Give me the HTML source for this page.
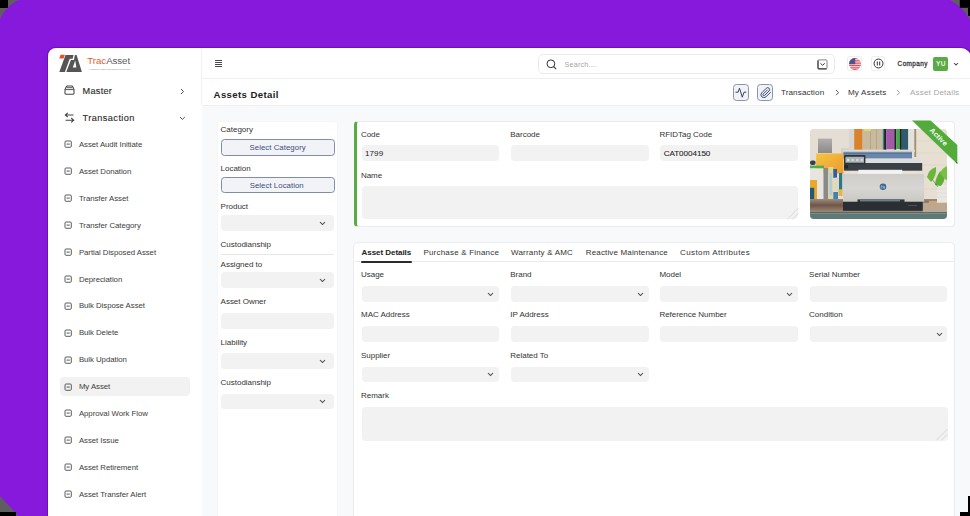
<!DOCTYPE html>
<html><head><meta charset="utf-8">
<style>
*{box-sizing:border-box;margin:0;padding:0}
html,body{width:970px;height:516px;overflow:hidden}
body{background:#8719dd;font-family:"Liberation Sans",sans-serif;position:relative;color:#333}
.a{position:absolute}
.t{position:absolute;white-space:nowrap;line-height:1}
</style></head><body>

<svg class="a" style="left:0;top:0" width="24" height="24"><path d="M0 0H20C12 2 2 12 0 20Z" fill="#5e5e5e"/><rect x="0" y="0" width="8" height="8" fill="#000"/></svg>
<div class="a" style="left:48.00px;top:47.60px;width:923.00px;height:512.40px;background:#fff;border-radius:8px 10px 0 0;box-shadow:0 0 0.8px 0.2px rgba(40,0,80,0.3)"></div>
<div class="a" style="left:201.30px;top:48.00px;width:1.00px;height:57.00px;background:#eff1f3"></div>
<div class="a" style="left:202.00px;top:77.80px;width:768.00px;height:1.00px;background:#eef0f3"></div>
<div class="a" style="left:201.80px;top:104.50px;width:768.20px;height:411.50px;background:#f8f9fb;border-top:1px solid #eceef1"></div>
<svg class="a" style="left:0;top:0" width="90" height="80" viewBox="0 0 90 80">
  <path d="M60.6 54.7H64.9L63.5 58.6H59.2Z" fill="#e8501e"/>
  <path d="M65.5 55H73.6L72.6 58.7L69.7 58.8L64.9 72H59.3Z" fill="#555"/>
  <path d="M74.9 55H76.6L81.9 72H66.3L70.9 60L73.9 59.9Z" fill="#555"/>
  <path d="M75.2 60.4L76.4 67.6H72.8Z" fill="#fff"/>
</svg>
<div class="t" style="left:87.30px;top:55.99px;font-size:9.7px;color:#5a5a5a;font-weight:normal;letter-spacing:-0.05px;"><span style="color:#e4602c">Trac</span>Asset</div>
<div class="t" style="left:87.80px;top:68.83px;font-size:2.45px;color:#8a8a8a;font-weight:normal;letter-spacing:0.0px;">A complete asset management solution</div>
<svg class="a" style="left:63.8px;top:85.3px" width="11" height="10" viewBox="0 0 11 10"><path d="M3.4 1H7.6Q8.5 1 8.8 1.8L10 4.6V8.2Q10 9.2 9 9.2H2Q1 9.2 1 8.2V4.6L2.2 1.8Q2.5 1 3.4 1Z" fill="none" stroke="#444" stroke-width="1.05"/><path d="M1.2 4.6H9.8M2.6 2.7H8.4" stroke="#444" stroke-width="0.9"/></svg>
<div class="t" style="left:82.60px;top:86.61px;font-size:9.2px;color:#2a2a2a;font-weight:normal;letter-spacing:0.25px;-webkit-text-stroke:0.12px #2a2a2a">Master</div>
<svg class="a" style="left:180.35px;top:87.70px" width="4.50" height="7.00"><path d="M1 1L3.50 3.50L1 6.00" fill="none" stroke="#444" stroke-width="0.95"/></svg>
<svg class="a" style="left:64px;top:111.7px" width="11" height="11" viewBox="0 0 11 11"><path d="M9.5 3H1.5M3.8 0.8L1.3 3L3.8 5.2" fill="none" stroke="#444" stroke-width="1.1"/><path d="M1.5 8.2H9.5M7.2 6L9.7 8.2L7.2 10.4" fill="none" stroke="#444" stroke-width="1.1"/></svg>
<div class="t" style="left:82.60px;top:113.61px;font-size:9.2px;color:#2a2a2a;font-weight:normal;letter-spacing:0.42px;-webkit-text-stroke:0.12px #2a2a2a">Transaction</div>
<svg class="a" style="left:179.30px;top:115.50px" width="6.80" height="4.40"><path d="M1 1L3.40 3.40L5.80 1" fill="none" stroke="#444" stroke-width="0.95"/></svg>
<div class="a" style="left:59.90px;top:377.00px;width:129.90px;height:19.00px;background:#f2f2f2;border-radius:4px"></div>
<svg class="a" style="left:63.5px;top:140.40px" width="8" height="8" viewBox="0 0 8 8"><rect x="1" y="1" width="6.3" height="6.3" rx="1.0" fill="none" stroke="#555" stroke-width="0.95"/><path d="M2.6 4.1H5.7" stroke="#555" stroke-width="1.0"/></svg>
<div class="t" style="left:78.90px;top:141.00px;font-size:7.8px;color:#3c3c3c;font-weight:normal;letter-spacing:-0.04px;">Asset Audit Initiate</div>
<svg class="a" style="left:63.5px;top:167.30px" width="8" height="8" viewBox="0 0 8 8"><rect x="1" y="1" width="6.3" height="6.3" rx="1.0" fill="none" stroke="#555" stroke-width="0.95"/><path d="M2.6 4.1H5.7" stroke="#555" stroke-width="1.0"/></svg>
<div class="t" style="left:78.90px;top:167.90px;font-size:7.8px;color:#3c3c3c;font-weight:normal;letter-spacing:-0.04px;">Asset Donation</div>
<svg class="a" style="left:63.5px;top:194.20px" width="8" height="8" viewBox="0 0 8 8"><rect x="1" y="1" width="6.3" height="6.3" rx="1.0" fill="none" stroke="#555" stroke-width="0.95"/><path d="M2.6 4.1H5.7" stroke="#555" stroke-width="1.0"/></svg>
<div class="t" style="left:78.90px;top:194.80px;font-size:7.8px;color:#3c3c3c;font-weight:normal;letter-spacing:-0.04px;">Transfer Asset</div>
<svg class="a" style="left:63.5px;top:221.10px" width="8" height="8" viewBox="0 0 8 8"><rect x="1" y="1" width="6.3" height="6.3" rx="1.0" fill="none" stroke="#555" stroke-width="0.95"/><path d="M2.6 4.1H5.7" stroke="#555" stroke-width="1.0"/></svg>
<div class="t" style="left:78.90px;top:221.70px;font-size:7.8px;color:#3c3c3c;font-weight:normal;letter-spacing:-0.04px;">Transfer Category</div>
<svg class="a" style="left:63.5px;top:248.00px" width="8" height="8" viewBox="0 0 8 8"><rect x="1" y="1" width="6.3" height="6.3" rx="1.0" fill="none" stroke="#555" stroke-width="0.95"/><path d="M2.6 4.1H5.7" stroke="#555" stroke-width="1.0"/></svg>
<div class="t" style="left:78.90px;top:248.60px;font-size:7.8px;color:#3c3c3c;font-weight:normal;letter-spacing:-0.04px;">Partial Disposed Asset</div>
<svg class="a" style="left:63.5px;top:274.90px" width="8" height="8" viewBox="0 0 8 8"><rect x="1" y="1" width="6.3" height="6.3" rx="1.0" fill="none" stroke="#555" stroke-width="0.95"/><path d="M2.6 4.1H5.7" stroke="#555" stroke-width="1.0"/></svg>
<div class="t" style="left:78.90px;top:275.50px;font-size:7.8px;color:#3c3c3c;font-weight:normal;letter-spacing:-0.04px;">Depreciation</div>
<svg class="a" style="left:63.5px;top:301.80px" width="8" height="8" viewBox="0 0 8 8"><rect x="1" y="1" width="6.3" height="6.3" rx="1.0" fill="none" stroke="#555" stroke-width="0.95"/><path d="M2.6 4.1H5.7" stroke="#555" stroke-width="1.0"/></svg>
<div class="t" style="left:78.90px;top:302.40px;font-size:7.8px;color:#3c3c3c;font-weight:normal;letter-spacing:-0.04px;">Bulk Dispose Asset</div>
<svg class="a" style="left:63.5px;top:328.70px" width="8" height="8" viewBox="0 0 8 8"><rect x="1" y="1" width="6.3" height="6.3" rx="1.0" fill="none" stroke="#555" stroke-width="0.95"/><path d="M2.6 4.1H5.7" stroke="#555" stroke-width="1.0"/></svg>
<div class="t" style="left:78.90px;top:329.30px;font-size:7.8px;color:#3c3c3c;font-weight:normal;letter-spacing:-0.04px;">Bulk Delete</div>
<svg class="a" style="left:63.5px;top:355.60px" width="8" height="8" viewBox="0 0 8 8"><rect x="1" y="1" width="6.3" height="6.3" rx="1.0" fill="none" stroke="#555" stroke-width="0.95"/><path d="M2.6 4.1H5.7" stroke="#555" stroke-width="1.0"/></svg>
<div class="t" style="left:78.90px;top:356.20px;font-size:7.8px;color:#3c3c3c;font-weight:normal;letter-spacing:-0.04px;">Bulk Updation</div>
<svg class="a" style="left:63.5px;top:382.50px" width="8" height="8" viewBox="0 0 8 8"><rect x="1" y="1" width="6.3" height="6.3" rx="1.0" fill="none" stroke="#555" stroke-width="0.95"/><path d="M2.6 4.1H5.7" stroke="#555" stroke-width="1.0"/></svg>
<div class="t" style="left:78.90px;top:383.10px;font-size:7.8px;color:#3c3c3c;font-weight:normal;letter-spacing:-0.04px;">My Asset</div>
<svg class="a" style="left:63.5px;top:409.40px" width="8" height="8" viewBox="0 0 8 8"><rect x="1" y="1" width="6.3" height="6.3" rx="1.0" fill="none" stroke="#555" stroke-width="0.95"/><path d="M2.6 4.1H5.7" stroke="#555" stroke-width="1.0"/></svg>
<div class="t" style="left:78.90px;top:410.00px;font-size:7.8px;color:#3c3c3c;font-weight:normal;letter-spacing:-0.04px;">Approval Work Flow</div>
<svg class="a" style="left:63.5px;top:436.30px" width="8" height="8" viewBox="0 0 8 8"><rect x="1" y="1" width="6.3" height="6.3" rx="1.0" fill="none" stroke="#555" stroke-width="0.95"/><path d="M2.6 4.1H5.7" stroke="#555" stroke-width="1.0"/></svg>
<div class="t" style="left:78.90px;top:436.90px;font-size:7.8px;color:#3c3c3c;font-weight:normal;letter-spacing:-0.04px;">Asset Issue</div>
<svg class="a" style="left:63.5px;top:463.20px" width="8" height="8" viewBox="0 0 8 8"><rect x="1" y="1" width="6.3" height="6.3" rx="1.0" fill="none" stroke="#555" stroke-width="0.95"/><path d="M2.6 4.1H5.7" stroke="#555" stroke-width="1.0"/></svg>
<div class="t" style="left:78.90px;top:463.80px;font-size:7.8px;color:#3c3c3c;font-weight:normal;letter-spacing:-0.04px;">Asset Retirement</div>
<svg class="a" style="left:63.5px;top:490.10px" width="8" height="8" viewBox="0 0 8 8"><rect x="1" y="1" width="6.3" height="6.3" rx="1.0" fill="none" stroke="#555" stroke-width="0.95"/><path d="M2.6 4.1H5.7" stroke="#555" stroke-width="1.0"/></svg>
<div class="t" style="left:78.90px;top:490.70px;font-size:7.8px;color:#3c3c3c;font-weight:normal;letter-spacing:-0.04px;">Asset Transfer Alert</div>
<div class="a" style="left:214.60px;top:59.80px;width:7.80px;height:0.90px;background:#4a4a4a"></div>
<div class="a" style="left:214.60px;top:62.00px;width:7.80px;height:0.90px;background:#4a4a4a"></div>
<div class="a" style="left:214.60px;top:64.20px;width:7.80px;height:0.90px;background:#4a4a4a"></div>
<div class="a" style="left:214.60px;top:66.40px;width:7.80px;height:0.90px;background:#4a4a4a"></div>
<div class="a" style="left:537.70px;top:54.20px;width:297.30px;height:19.40px;border:1px solid #ebebeb;border-radius:5px;background:#fff"></div>
<svg class="a" style="left:545.5px;top:58.5px" width="12" height="11" viewBox="0 0 12 11"><circle cx="4.9" cy="4.8" r="3.9" fill="none" stroke="#333" stroke-width="1.0"/><path d="M7.7 7.6L9.9 9.8" stroke="#333" stroke-width="1.05" stroke-linecap="round"/></svg>
<div class="t" style="left:564.50px;top:60.70px;font-size:7.2px;color:#a5a5a5;font-weight:normal;letter-spacing:0.2px;">Search....</div>
<svg class="a" style="left:816.5px;top:58.5px" width="11" height="11" viewBox="0 0 11 11"><rect x="1" y="0.9" width="9" height="8.9" rx="0.9" fill="none" stroke="#666" stroke-width="0.8"/><path d="M1 1.5V9Q1 9.8 1.8 9.8H9.5" fill="none" stroke="#444" stroke-width="1.2"/><path d="M3.5 4.3L5.6 6.3L7.7 4.3" fill="none" stroke="#333" stroke-width="1.0"/></svg>
<div class="a" style="left:847.00px;top:56.00px;width:15.30px;height:15.30px;border:1px solid #efefef;border-radius:2px;background:#fff"></div>
<svg class="a" style="left:848.7px;top:57.8px" width="12" height="12" viewBox="0 0 12 12">
<defs><clipPath id="fc"><circle cx="6" cy="6" r="6"/></clipPath></defs>
<g clip-path="url(#fc)"><rect width="12" height="12" fill="#f4f0f0"/>
<rect y="0" width="12" height="1" fill="#e05058"/><rect y="1.75" width="12" height="1" fill="#e05058"/><rect y="3.5" width="12" height="1" fill="#e05058"/><rect y="5.25" width="12" height="1" fill="#e05058"/><rect y="7" width="12" height="1" fill="#e05058"/><rect y="8.75" width="12" height="1" fill="#e05058"/><rect y="10.5" width="12" height="1.5" fill="#e05058"/>
<rect width="6.2" height="6.2" fill="#4a5590"/></g></svg>
<div class="a" style="left:871.00px;top:56.00px;width:14.40px;height:15.30px;border:1px solid #efefef;border-radius:2px;background:#fff"></div>
<svg class="a" style="left:872.8px;top:58.3px" width="11" height="11" viewBox="0 0 11 11"><circle cx="5.5" cy="5.5" r="4.45" fill="none" stroke="#333" stroke-width="1.0"/><path d="M4.3 3.5V7.5M6.7 3.5V7.5" stroke="#333" stroke-width="1.0"/></svg>
<div class="t" style="left:897.60px;top:60.88px;font-size:6.4px;color:#3a3a3a;font-weight:normal;letter-spacing:0.42px;-webkit-text-stroke:0.3px #3a3a3a">Company</div>
<div class="a" style="left:933.00px;top:57.00px;width:14.60px;height:13.60px;background:#5aaa45;border-radius:2px"></div>
<div class="t" style="left:936.00px;top:61.01px;font-size:6.6px;color:#e4f2de;font-weight:bold;letter-spacing:0.3px;">YU</div>
<svg class="a" style="left:952.50px;top:61.50px" width="6.00" height="4.00"><path d="M1 1L3.00 3.00L5.00 1" fill="none" stroke="#444" stroke-width="1.05"/></svg>
<div class="t" style="left:213.60px;top:89.67px;font-size:9.6px;color:#222;font-weight:bold;letter-spacing:0.38px;">Assets Detail</div>
<div class="a" style="left:732.70px;top:84.00px;width:16.10px;height:16.80px;background:#f1f2f6;border:1px solid #8c94a8;border-radius:3.5px"></div>
<svg class="a" style="left:734px;top:86px" width="14" height="13" viewBox="0 0 14 13"><path d="M1.9 6.2H4.1L5.5 2.2L8.3 11.2L10 6.2H11.9" fill="none" stroke="#2c3b5e" stroke-width="0.95" stroke-linejoin="round" stroke-linecap="round"/></svg>
<div class="a" style="left:756.90px;top:84.00px;width:16.10px;height:16.80px;background:#f1f2f6;border:1px solid #8c94a8;border-radius:3.5px"></div>
<svg class="a" style="left:759.5px;top:86.6px" width="11.7" height="11.7" viewBox="0 0 24 24"><path d="M21.44 11.05l-9.19 9.19a6 6 0 0 1-8.49-8.49l9.19-9.19a4 4 0 0 1 5.66 5.66l-9.2 9.19a2 2 0 0 1-2.83-2.83l8.49-8.48" fill="none" stroke="#34466f" stroke-width="2" stroke-linecap="round" stroke-linejoin="round"/></svg>
<div class="t" style="left:780.90px;top:88.74px;font-size:8.1px;color:#333;font-weight:normal;letter-spacing:0.13px;">Transaction</div>
<svg class="a" style="left:834.70px;top:89.20px" width="4.60" height="7.20"><path d="M1 1L3.60 3.60L1 6.20" fill="none" stroke="#444" stroke-width="0.9"/></svg>
<div class="t" style="left:847.90px;top:88.74px;font-size:8.1px;color:#333;font-weight:normal;letter-spacing:0.2px;">My Assets</div>
<svg class="a" style="left:896.30px;top:89.20px" width="4.60" height="7.20"><path d="M1 1L3.60 3.60L1 6.20" fill="none" stroke="#999" stroke-width="0.9"/></svg>
<div class="t" style="left:909.90px;top:88.74px;font-size:8.1px;color:#a8a8a8;font-weight:normal;letter-spacing:0.17px;">Asset Details</div>
<div class="a" style="left:216.80px;top:120.90px;width:121.00px;height:419.10px;background:#fff;border:1px solid #f5f6f8;border-radius:3px"></div>
<div class="t" style="left:220.60px;top:126.33px;font-size:8.0px;color:#333;font-weight:normal;letter-spacing:-0.02px;">Category</div>
<div class="a" style="left:221.20px;top:139.20px;width:113.80px;height:16.60px;background:#f2f3f6;border:1px solid #7f8cab;border-radius:3.5px"></div>
<div class="t" style="left:249.50px;top:143.70px;font-size:7.8px;color:#3b4d7e;font-weight:normal;letter-spacing:0.05px;">Select Category</div>
<div class="t" style="left:220.60px;top:165.03px;font-size:8.0px;color:#333;font-weight:normal;letter-spacing:-0.02px;">Location</div>
<div class="a" style="left:221.20px;top:177.30px;width:113.80px;height:16.20px;background:#f2f3f6;border:1px solid #7f8cab;border-radius:3.5px"></div>
<div class="t" style="left:249.70px;top:181.80px;font-size:7.8px;color:#3b4d7e;font-weight:normal;letter-spacing:0.05px;">Select Location</div>
<div class="t" style="left:220.60px;top:203.03px;font-size:8.0px;color:#333;font-weight:normal;letter-spacing:-0.02px;">Product</div>
<div class="a" style="left:221.20px;top:215.00px;width:113.00px;height:16.40px;background:#f2f2f2;border-radius:4px"></div>
<svg class="a" style="left:319.10px;top:220.95px" width="7.00" height="4.50"><path d="M1 1L3.50 3.50L6.00 1" fill="none" stroke="#444" stroke-width="1.05"/></svg>
<div class="t" style="left:220.60px;top:241.33px;font-size:8.0px;color:#333;font-weight:normal;letter-spacing:-0.02px;">Custodianship</div>
<div class="a" style="left:221.20px;top:254.00px;width:113.00px;height:1.00px;background:#e6e6e6"></div>
<div class="t" style="left:220.60px;top:260.63px;font-size:8.0px;color:#333;font-weight:normal;letter-spacing:-0.02px;">Assigned to</div>
<div class="a" style="left:221.20px;top:272.40px;width:113.00px;height:15.90px;background:#f2f2f2;border-radius:4px"></div>
<svg class="a" style="left:319.10px;top:278.15px" width="7.00" height="4.50"><path d="M1 1L3.50 3.50L6.00 1" fill="none" stroke="#444" stroke-width="1.05"/></svg>
<div class="t" style="left:220.60px;top:298.43px;font-size:8.0px;color:#333;font-weight:normal;letter-spacing:-0.02px;">Asset Owner</div>
<div class="a" style="left:221.20px;top:313.10px;width:113.00px;height:15.50px;background:#f2f2f2;border-radius:4px"></div>
<div class="t" style="left:220.60px;top:338.83px;font-size:8.0px;color:#333;font-weight:normal;letter-spacing:-0.02px;">Liability</div>
<div class="a" style="left:221.20px;top:353.20px;width:113.00px;height:16.00px;background:#f2f2f2;border-radius:4px"></div>
<svg class="a" style="left:319.10px;top:358.95px" width="7.00" height="4.50"><path d="M1 1L3.50 3.50L6.00 1" fill="none" stroke="#444" stroke-width="1.05"/></svg>
<div class="t" style="left:220.60px;top:379.33px;font-size:8.0px;color:#333;font-weight:normal;letter-spacing:-0.02px;">Custodianship</div>
<div class="a" style="left:221.20px;top:393.60px;width:113.00px;height:15.70px;background:#f2f2f2;border-radius:4px"></div>
<svg class="a" style="left:319.10px;top:399.15px" width="7.00" height="4.50"><path d="M1 1L3.50 3.50L6.00 1" fill="none" stroke="#444" stroke-width="1.05"/></svg>
<div class="a" style="left:354.00px;top:121.30px;width:600.60px;height:105.90px;background:#fff;border:1px solid #e9ebee;border-left:3.8px solid #58ad42;border-radius:4px"></div>
<div class="t" style="left:360.90px;top:131.13px;font-size:8.0px;color:#333;font-weight:normal;letter-spacing:-0.02px;">Code</div>
<div class="t" style="left:510.30px;top:131.13px;font-size:8.0px;color:#333;font-weight:normal;letter-spacing:-0.02px;">Barcode</div>
<div class="t" style="left:659.40px;top:131.13px;font-size:8.0px;color:#333;font-weight:normal;letter-spacing:-0.02px;">RFIDTag Code</div>
<div class="a" style="left:361.50px;top:145.40px;width:137.50px;height:15.60px;background:#f2f2f2;border-radius:4px"></div>
<div class="a" style="left:510.90px;top:145.40px;width:138.20px;height:15.60px;background:#f2f2f2;border-radius:4px"></div>
<div class="a" style="left:660.00px;top:145.40px;width:137.80px;height:15.60px;background:#f2f2f2;border-radius:4px"></div>
<div class="t" style="left:365.00px;top:149.74px;font-size:8.1px;color:#1e1e1e;font-weight:normal;letter-spacing:0.05px;">1799</div>
<div class="t" style="left:663.70px;top:149.74px;font-size:8.1px;color:#1e1e1e;font-weight:normal;letter-spacing:-0.05px;-webkit-text-stroke:0.1px #1e1e1e">CAT0004150</div>
<div class="t" style="left:360.90px;top:171.63px;font-size:8.0px;color:#333;font-weight:normal;letter-spacing:-0.02px;">Name</div>
<div class="a" style="left:361.50px;top:185.60px;width:436.50px;height:33.60px;background:#f2f2f2;border-radius:4px"></div>
<svg class="a" style="left:785.5px;top:206.5px" width="13" height="13"><path d="M12.4 1.2L1.2 12.4M12.4 6.2L6.2 12.4" stroke="#d2d2d2" stroke-width="0.9"/></svg>
<div class="a" style="left:809.8px;top:129px;width:137.7px;height:90px;border-radius:4px;overflow:hidden;background:#e6e0d6">
<svg width="138" height="90" viewBox="0 0 138 90" style="filter:blur(0.35px)">
<defs>
<linearGradient id="gy" x1="0" y1="0" x2="0" y2="1"><stop offset="0" stop-color="#b0afad"/><stop offset="1" stop-color="#8c8a88"/></linearGradient>
<linearGradient id="yf" x1="0" y1="0" x2="1" y2="1"><stop offset="0" stop-color="#f3c544"/><stop offset="1" stop-color="#ef9a2a"/></linearGradient>
<linearGradient id="desk" x1="0" y1="0" x2="0" y2="1"><stop offset="0" stop-color="#9a8b7e"/><stop offset="0.45" stop-color="#6e5646"/><stop offset="1" stop-color="#a59180"/></linearGradient>
<linearGradient id="body" x1="0" y1="0" x2="0" y2="1"><stop offset="0" stop-color="#cfcdc9"/><stop offset="0.5" stop-color="#d8d6d2"/><stop offset="1" stop-color="#cac8c3"/></linearGradient>
</defs>
<rect width="138" height="90" fill="#e7e1d7"/>
<rect x="0" y="0" width="39" height="70" fill="#e4ded4"/>
<rect x="106" y="0" width="32" height="74" fill="#e6dfd2"/>
<path d="M106 12H138M106 24H138M106 36H138M106 48H138M106 60H138" stroke="#ddd5c7" stroke-width="0.6"/>
<rect x="8" y="9.6" width="14" height="14.4" fill="url(#gy)"/>
<rect x="31" y="19.4" width="8" height="6" fill="#d3cec6"/>
<rect x="39" y="0" width="5.2" height="21" fill="#d8d5d0"/>
<rect x="44.2" y="0" width="8.4" height="20.8" fill="#d8832b"/>
<rect x="52.6" y="0" width="20" height="20.8" fill="#c9b99d"/>
<rect x="60" y="0" width="0.8" height="20.8" fill="#b3a386"/>
<rect x="66" y="0" width="0.8" height="20.8" fill="#b3a386"/>
<rect x="54" y="0" width="7" height="2" fill="#e7d46a"/>
<rect x="72.7" y="0" width="1.4" height="20.8" fill="#3c7f86"/>
<rect x="74.1" y="0" width="2.3" height="20.8" fill="#1d2327"/>
<rect x="76.4" y="0" width="7.9" height="20.3" fill="#a45aaa"/>
<rect x="84.3" y="0" width="1.9" height="20.8" fill="#1e2426"/>
<rect x="86.2" y="0" width="3.7" height="20" fill="#46a64a"/>
<rect x="89.9" y="0" width="1.9" height="20.8" fill="#1c2224"/>
<rect x="91.8" y="0" width="6.5" height="20.8" fill="#2f5b6e"/>
<rect x="98.3" y="0" width="6" height="27" fill="#e3e1dc"/>
<rect x="104.3" y="0" width="1.9" height="28" fill="#a58f70"/>
<rect x="33" y="20.8" width="72" height="2" fill="#dedbd5"/>
<path d="M6.1 24.5H33.5V44.5H6.1Z" fill="url(#yf)"/>
<rect x="0" y="31.5" width="5.6" height="4.5" rx="2" fill="#3b3f44"/>
<rect x="0" y="36.6" width="14" height="2.8" fill="#4caf50"/>
<rect x="0" y="39.4" width="13.5" height="31" fill="#e8e4de"/>
<rect x="0" y="51" width="7" height="20" fill="#e6a82e"/>
<rect x="0" y="58.8" width="4.2" height="13" fill="#1f5b72"/>
<rect x="13.5" y="39" width="4.7" height="31" fill="#8a8a8a"/>
<rect x="18.2" y="38" width="5.1" height="32" fill="#e0d39e"/>
<rect x="19.5" y="44" width="2.5" height="22" fill="#a9cde0"/>
<rect x="23.3" y="40" width="3.7" height="9" fill="#2f5ea5"/>
<rect x="24.3" y="48.6" width="4.6" height="14" fill="#ddd8c4"/>
<rect x="29" y="44" width="3.2" height="16.7" fill="#2a7a85"/>
<rect x="28.5" y="60.5" width="4" height="6.5" fill="#e6b440"/>
<rect x="23.3" y="63" width="4.7" height="7" fill="#3b82b8"/>
<rect x="0" y="70" width="138" height="14" fill="url(#desk)"/>
<rect x="112.7" y="73.7" width="25.3" height="10.3" fill="#baa892"/>
<rect x="0" y="83.2" width="138" height="1.2" fill="#4a5f5c"/>
<rect x="0" y="84.4" width="138" height="5.6" fill="#5e7a77"/>
<!-- plant -->
<rect x="118.8" y="71.8" width="19.2" height="3.8" fill="#c8a67c"/>
<rect x="127" y="56" width="11" height="17.7" fill="#e9e7e2"/>
<path d="M127 60H138M127 64H138M127 68H138" stroke="#d6d3cc" stroke-width="0.5"/>
<path d="M117 48Q119 40 126 38Q127 47 121 53Z" fill="#6cb73b"/>
<path d="M125 56Q126 44 134 40Q137 50 131 57Z" fill="#5fae36"/>
<path d="M130 44Q133 38 138 37V52Q134 50 130 44Z" fill="#78c043"/>
<path d="M122 50L128 58" stroke="#3f8a2a" stroke-width="0.7"/>
<!-- printer -->
<rect x="33.5" y="22.6" width="68.5" height="1.2" fill="#9fb0c4"/>
<rect x="33.5" y="23.6" width="68.5" height="6" fill="#6887ab"/>
<rect x="33.5" y="23.6" width="68.5" height="1" fill="#4f6d8f"/>
<rect x="55.4" y="29.6" width="55.5" height="4.4" fill="#dcdee0"/>
<rect x="34" y="34" width="78.2" height="7.7" fill="#3a4046"/>
<rect x="34" y="25.9" width="21.4" height="9.3" rx="1" fill="#2f3338"/>
<rect x="35.4" y="27.8" width="18.6" height="6" rx="0.6" fill="#a9b1b3"/>
<rect x="37" y="29.8" width="2.4" height="2.4" fill="#cfe6d2"/><rect x="41.5" y="29.8" width="2.4" height="2.4" fill="#bfe3c2"/><rect x="46" y="29.8" width="2.4" height="2.4" fill="#e7c9d4"/><rect x="50.5" y="29.8" width="2.4" height="2.4" fill="#c9d6ea"/>
<rect x="34" y="36" width="4" height="3.5" fill="#23272b"/>
<rect x="48.4" y="40.8" width="43.8" height="5.2" fill="#f2f2f0"/>
<rect x="33" y="44.9" width="81.1" height="27.9" fill="url(#body)"/>
<rect x="47.5" y="70.4" width="47" height="2.6" fill="#30353a"/>
<rect x="50" y="71.4" width="40" height="0.9" fill="#8fb0c8"/>
<circle cx="73" cy="57.8" r="3.3" fill="#3a6a92"/>
<path d="M71.6 56.2L71 59.6M72.3 57.4Q73.6 57 73.4 58.2L73 59.6M73.5 57.6Q74.8 57.1 74.6 58.3L74.3 59.8" stroke="#e8eef3" stroke-width="0.5" fill="none"/>
<rect x="33" y="72.8" width="79.7" height="9" fill="#2b2f33"/>
<rect x="98" y="76" width="9" height="1" fill="#4a4f55"/>
</svg></div>
<svg class="a" style="left:905px;top:115px" width="60" height="55" viewBox="0 0 60 55">
<path d="M7 5.5H25.6L52.3 30V49Z" fill="#53ab3b"/>
<path d="M52.3 49L50.3 46.5L52.3 47.2Z" fill="#2d6b20"/>
</svg>
<div class="t" style="left:927.4px;top:133.6px;font-size:7.1px;color:#fff;font-weight:bold;transform:rotate(45deg);transform-origin:50% 50%;letter-spacing:0.15px">Active</div>
<div class="a" style="left:353.00px;top:242.00px;width:601.90px;height:318.00px;background:#fff;border:1px solid #eaecef;border-radius:5px"></div>
<div class="a" style="left:354.70px;top:261.10px;width:598.90px;height:1.00px;background:#ebebeb"></div>
<div class="t" style="left:361.60px;top:248.53px;font-size:8.0px;color:#222;font-weight:bold;letter-spacing:-0.05px;">Asset Details</div>
<div class="a" style="left:361.20px;top:260.50px;width:50.70px;height:2.00px;background:#2a2a2a;border-radius:1px"></div>
<div class="t" style="left:423.40px;top:248.53px;font-size:8.0px;color:#333;font-weight:normal;letter-spacing:0.2px;">Purchase &amp; Finance</div>
<div class="t" style="left:511.00px;top:248.53px;font-size:8.0px;color:#333;font-weight:normal;letter-spacing:0.2px;">Warranty &amp; AMC</div>
<div class="t" style="left:585.80px;top:248.53px;font-size:8.0px;color:#333;font-weight:normal;letter-spacing:0.15px;">Reactive Maintenance</div>
<div class="t" style="left:680.00px;top:248.53px;font-size:8.0px;color:#333;font-weight:normal;letter-spacing:0.41px;">Custom Attributes</div>
<div class="t" style="left:361.00px;top:270.93px;font-size:8.0px;color:#333;font-weight:normal;letter-spacing:-0.02px;">Usage</div>
<div class="a" style="left:361.60px;top:286.10px;width:137.30px;height:15.50px;background:#f2f2f2;border-radius:4px"></div>
<svg class="a" style="left:487.10px;top:291.60px" width="7.00" height="4.50"><path d="M1 1L3.50 3.50L6.00 1" fill="none" stroke="#444" stroke-width="1.05"/></svg>
<div class="t" style="left:510.30px;top:270.93px;font-size:8.0px;color:#333;font-weight:normal;letter-spacing:-0.02px;">Brand</div>
<div class="a" style="left:510.90px;top:286.10px;width:137.70px;height:15.50px;background:#f2f2f2;border-radius:4px"></div>
<svg class="a" style="left:636.80px;top:291.60px" width="7.00" height="4.50"><path d="M1 1L3.50 3.50L6.00 1" fill="none" stroke="#444" stroke-width="1.05"/></svg>
<div class="t" style="left:659.40px;top:270.93px;font-size:8.0px;color:#333;font-weight:normal;letter-spacing:-0.02px;">Model</div>
<div class="a" style="left:660.00px;top:286.10px;width:137.60px;height:15.50px;background:#f2f2f2;border-radius:4px"></div>
<svg class="a" style="left:785.80px;top:291.60px" width="7.00" height="4.50"><path d="M1 1L3.50 3.50L6.00 1" fill="none" stroke="#444" stroke-width="1.05"/></svg>
<div class="t" style="left:809.10px;top:270.93px;font-size:8.0px;color:#333;font-weight:normal;letter-spacing:-0.02px;">Serial Number</div>
<div class="a" style="left:809.70px;top:286.10px;width:137.80px;height:15.50px;background:#f2f2f2;border-radius:4px"></div>
<div class="t" style="left:361.00px;top:311.03px;font-size:8.0px;color:#333;font-weight:normal;letter-spacing:-0.02px;">MAC Address</div>
<div class="a" style="left:361.60px;top:326.40px;width:137.30px;height:15.30px;background:#f2f2f2;border-radius:4px"></div>
<div class="t" style="left:510.30px;top:311.03px;font-size:8.0px;color:#333;font-weight:normal;letter-spacing:-0.02px;">IP Address</div>
<div class="a" style="left:510.90px;top:326.40px;width:137.70px;height:15.30px;background:#f2f2f2;border-radius:4px"></div>
<div class="t" style="left:659.40px;top:311.03px;font-size:8.0px;color:#333;font-weight:normal;letter-spacing:-0.02px;">Reference Number</div>
<div class="a" style="left:660.00px;top:326.40px;width:137.60px;height:15.30px;background:#f2f2f2;border-radius:4px"></div>
<div class="t" style="left:809.10px;top:311.03px;font-size:8.0px;color:#333;font-weight:normal;letter-spacing:-0.02px;">Condition</div>
<div class="a" style="left:809.70px;top:326.40px;width:137.80px;height:15.30px;background:#f2f2f2;border-radius:4px"></div>
<svg class="a" style="left:935.70px;top:331.80px" width="7.00" height="4.50"><path d="M1 1L3.50 3.50L6.00 1" fill="none" stroke="#444" stroke-width="1.05"/></svg>
<div class="t" style="left:361.00px;top:351.93px;font-size:8.0px;color:#333;font-weight:normal;letter-spacing:-0.02px;">Supplier</div>
<div class="a" style="left:361.60px;top:366.70px;width:137.30px;height:15.70px;background:#f2f2f2;border-radius:4px"></div>
<svg class="a" style="left:487.10px;top:372.30px" width="7.00" height="4.50"><path d="M1 1L3.50 3.50L6.00 1" fill="none" stroke="#444" stroke-width="1.05"/></svg>
<div class="t" style="left:510.30px;top:351.93px;font-size:8.0px;color:#333;font-weight:normal;letter-spacing:-0.02px;">Related To</div>
<div class="a" style="left:510.90px;top:366.70px;width:137.70px;height:15.70px;background:#f2f2f2;border-radius:4px"></div>
<svg class="a" style="left:636.80px;top:372.30px" width="7.00" height="4.50"><path d="M1 1L3.50 3.50L6.00 1" fill="none" stroke="#444" stroke-width="1.05"/></svg>
<div class="t" style="left:361.00px;top:392.43px;font-size:8.0px;color:#333;font-weight:normal;letter-spacing:-0.02px;">Remark</div>
<div class="a" style="left:361.60px;top:407.00px;width:586.00px;height:33.70px;background:#f2f2f2;border-radius:4px"></div>
<svg class="a" style="left:935px;top:428px" width="13" height="13"><path d="M12.4 1.2L1.2 12.4M12.4 6.2L6.2 12.4" stroke="#d2d2d2" stroke-width="0.9"/></svg>
<svg class="a" style="left:946px;top:0" width="24" height="24" viewBox="946 0 24 24"><path d="M950 0C958 4 966 12 970 20V0Z" fill="#5e5e5e"/><rect x="959.8" y="0" width="10.2" height="7.8" fill="#000"/><rect x="968" y="7.6" width="2" height="8.3" fill="#000"/></svg>
<svg class="a" style="left:0;top:490px" width="24" height="26" viewBox="0 490 24 26"><path d="M0 496.2L18.5 516H0Z" fill="#5e5e5e"/><rect x="0" y="512" width="16" height="4" fill="#000"/></svg>
<div class="a" style="left:968.00px;top:496.00px;width:2.00px;height:20.00px;background:#000"></div>
<div class="a" style="left:960.00px;top:512.00px;width:10.00px;height:4.00px;background:#000"></div>
</body></html>
